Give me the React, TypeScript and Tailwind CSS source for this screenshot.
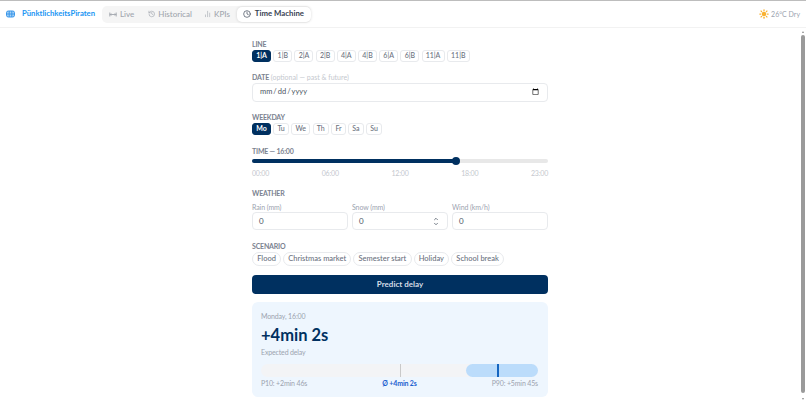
import { History, Clock, ChartNoAxesColumn, Sun, ChevronUp, ChevronDown } from "lucide-react";

const lines = ["1|A","1|B","2|A","2|B","4|A","4|B","6|A","6|B","11|A","11|B"];
const days = ["Mo","Tu","We","Th","Fr","Sa","Su"];
const scenarios = ["Flood","Christmas market","Semester start","Holiday","School break"];

function Chip({ label, active }: { label: string; active?: boolean }) {
  return (
    <span className={active
      ? "h-[11.5px] px-[3.2px] rounded-[3px] border border-[#003060] bg-[#003060] text-white text-[7px] leading-[9.5px] text-center font-bold"
      : "h-[11.5px] px-[3.2px] rounded-[3px] border border-[#e8eaed] bg-white text-[#6b7280] text-[7px] leading-[9.5px] text-center font-medium"}>
      {label}
    </span>
  );
}

function Num({ label, spin }: { label: string; spin?: boolean }) {
  return (
    <div className="flex-1 flex flex-col gap-[0.3px]">
      <span className="text-[7px] tracking-[-0.1px] leading-[10px] text-[#9ca3af]">{label}</span>
      <div className="h-[17.7px] rounded-[4px] border border-[#e8eaed] bg-white px-[6px] flex items-center justify-between text-[8px] text-[#4b5563]">
        <span>0</span>
        {spin && (
          <span className="flex flex-col text-[#4b5563] mr-[2px]">
            <ChevronUp size={6} strokeWidth={3} />
            <ChevronDown size={6} strokeWidth={3} className="-mt-[1px]" />
          </span>
        )}
      </div>
    </div>
  );
}

function Label({ children }: { children: React.ReactNode }) {
  return <div className="text-[7px] leading-[10px] font-bold tracking-[-0.2px] text-[#7b8290]">{children}</div>;
}

export default function App() {
  return (
    <div className="h-[404px] w-[806px] flex flex-col overflow-hidden bg-white font-['Lato',sans-serif]">
      <header className="h-[28px] shrink-0 border-t border-t-[#bdbdbd] border-b border-b-[#f2f2f2] flex items-center pl-[6px] pr-[6px]">
        <svg width="9" height="8" viewBox="0 0 9 8" fill="none" stroke="#3b97ea" strokeWidth="1">
          <rect x="0.5" y="1" width="8" height="6" rx="1.8" fill="#a9d2f5" />
          <path d="M3.2 1v6M5.8 1v6M0.5 4h8" />
        </svg>
        <span className="ml-[7px] w-[73px] text-[7.7px] font-bold text-[#2196f3] whitespace-nowrap">PünktlichkeitsPiraten</span>
        <nav className="ml-[7px] h-[17px] w-[209px] rounded-[5px] bg-[#f5f5f5] flex items-center text-[8px] text-[#a1a6ae] font-medium">
          <span className="ml-[7px] w-[26px] flex items-center gap-[3px]">
            <svg width="8" height="7" viewBox="0 0 8 7" fill="none" stroke="#a1a6ae" strokeWidth="0.9"><path d="M0.8 1.5v4M7.2 1.5v4M1 3.5h6M2.2 2.4l-1 1.1 1 1.1M5.8 2.4l1 1.1-1 1.1"/></svg>
            Live
          </span>
          <span className="ml-[13px] w-[44px] flex items-center gap-[3px]"><History size={8} />Historical</span>
          <span className="ml-[12px] w-[26px] flex items-center gap-[3px]"><ChartNoAxesColumn size={8} />KPIs</span>
          <span className="ml-[7px] flex items-center gap-[4px] h-[15px] pl-[6px] pr-[7px] rounded-[5px] bg-white text-[#374151] text-[7.8px] font-bold shadow-[0_0_3px_rgba(0,0,0,0.15)] whitespace-nowrap"><Clock size={8} />Time Machine</span>
        </nav>
        <span className="ml-auto flex items-center gap-[2px] text-[7px] text-[#9ca3af]"><Sun size={10} fill="#f9b233" color="#f9b233" strokeWidth={3} />26°C Dry</span>
      </header>
      <div className="flex-1 flex min-h-0">
        <main className="flex-1 overflow-hidden">
          <div className="w-[296px] mx-auto pt-[10.5px] flex flex-col">
            <Label>LINE</Label>
            <div className="mt-[1.5px] flex gap-[2.3px]">{lines.map((l, i) => <Chip key={l} label={l} active={i === 0} />)}</div>

            <div className="mt-[10px] text-[7px] leading-[10px] text-[#c4c8ce]"><span className="font-bold tracking-[-0.2px] text-[#7b8290]">DATE</span> (optional — past &amp; future)</div>
            <input type="date" className="mt-[1px] h-[19px] w-full rounded-[4px] border border-[#e8eaed] px-[6px] text-[7.5px] text-[#4b5563]" />

            <div className="mt-[10px]"><Label>WEEKDAY</Label></div>
            <div className="mt-[1.5px] flex gap-[2.3px]">{days.map((d, i) => <Chip key={d} label={d} active={i === 0} />)}</div>

            <div className="mt-[11px]"><Label>TIME — 16:00</Label></div>
            <div className="mt-[1.7px] h-[8px] relative flex items-center">
              <div className="w-full h-[4px] rounded-full bg-[#e8e8e8]"><div className="h-full w-[69%] rounded-full bg-[#003060]" /></div>
              <div className="absolute left-[200px] w-[8px] h-[8px] rounded-full bg-[#003060]" />
            </div>
            <div className="mt-[3px] flex justify-between text-[7px] tracking-[-0.2px] leading-[10px] text-[#c4c8ce]">
              <span>00:00</span><span>06:00</span><span>12:00</span><span>18:00</span><span>23:00</span>
            </div>

            <div className="mt-[10.3px]"><Label>WEATHER</Label></div>
            <div className="mt-[3.7px] flex gap-[4px]">
              <Num label="Rain (mm)" /><Num label="Snow (mm)" spin /><Num label="Wind (km/h)" />
            </div>

            <div className="mt-[11px]"><Label>SCENARIO</Label></div>
            <div className="mt-[0.6px] flex gap-[2px]">
              {scenarios.map(s => <span key={s} className="h-[14px] px-[4.2px] rounded-full border border-[#e8eaed] text-[7.5px] leading-[12px] text-[#6b7280] font-medium">{s}</span>)}
            </div>

            <button className="mt-[9px] h-[19.4px] rounded-[4px] bg-[#003060] text-[#d5dde6] text-[8px] font-bold">Predict delay</button>

            <section className="mt-[8.3px] h-[94.7px] rounded-[6px] bg-[#eef6fe] px-[9px] pt-[8.7px]">
              <div className="text-[7px] tracking-[-0.15px] leading-[10px] text-[#9ca3af]">Monday, 16:00</div>
              <div className="mt-[4px] text-[16.5px] leading-[20px] font-bold text-[#003060]">+4min 2s</div>
              <div className="mt-[2.3px] text-[7px] tracking-[-0.15px] leading-[10px] text-[#9ca3af]">Expected delay</div>
              <div className="mt-[7px] relative h-[13px] rounded-full bg-[#f3f4f6] w-[277px]">
                <div className="absolute left-[205px] right-0 top-0 bottom-0 rounded-full bg-[#bbdcfb]" />
                <div className="absolute left-[139px] top-0 bottom-0 w-[1px] bg-[#c9c9c9]" />
                <div className="absolute left-[236px] top-0 bottom-0 w-[2px] bg-[#1565c0]" />
              </div>
              <div className="mt-[0.7px] w-[277px] flex justify-between text-[7px] tracking-[-0.15px] leading-[10px] text-[#9ca3af]">
                <span>P10: +2min 46s</span><span className="font-bold text-[#1e62d0]">Ø +4min 2s</span><span>P90: +5min 45s</span>
              </div>
            </section>
          </div>
        </main>
        <div className="w-[6px] shrink-0 flex flex-col items-center justify-between pt-[3px] pb-[4px]">
          <div className="w-0 h-0 border-x-[1.5px] border-x-transparent border-b-[2px] border-b-[#8a8a8a]" />
          <div className="w-[4px] flex-1 mt-[2px] mb-[5px] rounded-full bg-[#9a9a9a]" />
          <div className="w-0 h-0 border-x-[1.5px] border-x-transparent border-t-[2px] border-t-[#8a8a8a]" />
        </div>
      </div>
    </div>
  );
}
